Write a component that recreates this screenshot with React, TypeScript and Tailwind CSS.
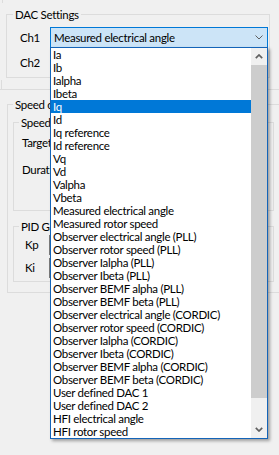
import React from "react";

const items = [
  "Ia",
  "Ib",
  "Ialpha",
  "Ibeta",
  "Iq",
  "Id",
  "Iq reference",
  "Id reference",
  "Vq",
  "Vd",
  "Valpha",
  "Vbeta",
  "Measured electrical angle",
  "Measured rotor speed",
  "Observer electrical angle (PLL)",
  "Observer rotor speed (PLL)",
  "Observer Ialpha (PLL)",
  "Observer Ibeta (PLL)",
  "Observer BEMF alpha (PLL)",
  "Observer BEMF beta (PLL)",
  "Observer electrical angle (CORDIC)",
  "Observer rotor speed (CORDIC)",
  "Observer Ialpha (CORDIC)",
  "Observer Ibeta (CORDIC)",
  "Observer BEMF alpha (CORDIC)",
  "Observer BEMF beta (CORDIC)",
  "User defined DAC 1",
  "User defined DAC 2",
  "HFI electrical angle",
  "HFI rotor speed",
];

const SELECTED = 4;

function ComboChevron() {
  return (
    <svg width="8" height="5" viewBox="0 0 8 5" className="block">
      <polyline points="0.5,0.5 4,4 7.5,0.5" fill="none" stroke="#606060" strokeWidth="1" />
    </svg>
  );
}

function ScrollArrow({ up }: { up?: boolean }) {
  return (
    <svg width="8" height="5" viewBox="0 0 8 5" className="block">
      {up ? (
        <polyline points="0.8,4.2 4,1 7.2,4.2" fill="none" stroke="#606060" strokeWidth="1.7" />
      ) : (
        <polyline points="0.8,0.8 4,4 7.2,0.8" fill="none" stroke="#606060" strokeWidth="1.7" />
      )}
    </svg>
  );
}

function GroupLabel({ children, dac }: { children: React.ReactNode; dac?: boolean }) {
  return (
    <span
      className={
        dac
          ? "absolute -top-[7px] left-[6px] px-[2px] bg-[#F0F0F0] leading-[14px] whitespace-nowrap"
          : "absolute -top-[7px] left-[5px] px-[2px] bg-[#F0F0F0] leading-[14px] whitespace-nowrap"
      }
    >
      {children}
    </span>
  );
}

function TextBox() {
  return <div className="h-[20px] w-[120px] bg-white border border-[#7A7A7A]" />;
}

export default function App() {
  return (
    <div className="relative w-[279px] h-[455px] overflow-hidden bg-[#F0F0F0] text-black font-['Lato',sans-serif] text-[11.5px] tracking-[-0.3px]">
      {/* top panel */}
      <div className="flex flex-col h-[90px] border-b border-[#DCDCDC]">
        <div className="ml-[2px] w-[1px] h-[3px] bg-[#DCDCDC]" />
        <div className="relative mt-[11px] ml-[6px] w-[264px] h-[64px] border border-[#DCDCDC]">
          <GroupLabel dac>DAC Settings</GroupLabel>
          <div className="flex flex-col pt-[12px] pl-[13px] gap-[4px]">
            <div className="flex items-center h-[21px]">
              <span className="w-[30px]">Ch1</span>
              <div className="flex items-center justify-between w-[218px] h-[21px] bg-[#CCE4F7] border border-[#0078D7] pl-[3px] pr-[4px]">
                <span className="whitespace-nowrap">Measured electrical angle</span>
                <ComboChevron />
              </div>
            </div>
            <div className="flex items-center h-[21px]">
              <span className="w-[30px]">Ch2</span>
              <div className="flex items-center justify-end w-[218px] h-[21px] bg-[#E1E1E1] border border-[#ADADAD] pr-[4px]">
                <ComboChevron />
              </div>
            </div>
          </div>
        </div>
        <div className="mt-[2px] ml-[1px] w-[1px] h-[9px] bg-[#DCDCDC]" />
      </div>

      {/* speed control group */}
      <div className="relative mt-[14px] ml-[7px] w-[290px] h-[189px] border border-[#DCDCDC]">
        <GroupLabel>Speed control</GroupLabel>
        <div className="flex flex-col pl-[5px] pt-[17px]">
          <div className="relative w-[261px] h-[89px] border border-[#DCDCDC]">
            <GroupLabel>Speed ramp</GroupLabel>
            <div className="flex flex-col pt-[10px] pl-[8px] gap-[7px]">
              <div className="flex items-center h-[20px]">
                <span className="w-[80px]">Target speed</span>
                <TextBox />
              </div>
              <div className="flex items-center h-[20px]">
                <span className="w-[80px]">Duration (ms)</span>
                <TextBox />
              </div>
            </div>
          </div>
          <div className="relative mt-[15px] w-[261px] h-[56px] border border-[#DCDCDC]">
            <GroupLabel>PID Gains</GroupLabel>
            <div className="flex flex-col pt-[8px] pl-[11px] gap-[3px]">
              <div className="flex items-center h-[20px]">
                <span className="w-[24px]">Kp</span>
                <TextBox />
              </div>
              <div className="flex items-center h-[20px]">
                <span className="w-[24px]">Ki</span>
                <TextBox />
              </div>
            </div>
          </div>
        </div>
      </div>

      {/* open dropdown list */}
      <div className="absolute left-[50px] top-[47px] w-[218px] flex bg-white border border-[#1464B8] shadow-[2px_2px_3px_rgba(0,0,0,0.35)]">
        <div className="flex flex-col w-[200px]">
          {items.map((it, i) => (
            <div
              key={it}
              className={
                i === SELECTED
                  ? "h-[13px] leading-[13px] pl-[2px] whitespace-nowrap overflow-hidden bg-[#0078D7] text-white"
                  : "h-[13px] leading-[13px] pl-[2px] whitespace-nowrap overflow-hidden"
              }
            >
              {it}
            </div>
          ))}
        </div>
        <div className="flex flex-col w-[16px] bg-[#F0F0F0]">
          <div className="flex items-center justify-center h-[17px]">
            <ScrollArrow up />
          </div>
          <div className="flex-1 flex flex-col">
            <div className="h-[333px] bg-[#CDCDCD]" />
          </div>
          <div className="flex items-center justify-center h-[17px]">
            <ScrollArrow />
          </div>
        </div>
      </div>
    </div>
  );
}
